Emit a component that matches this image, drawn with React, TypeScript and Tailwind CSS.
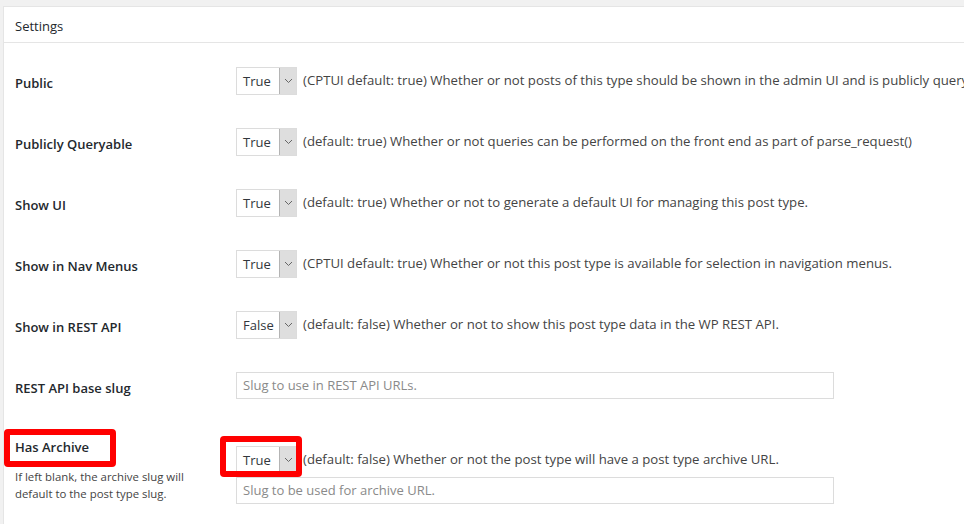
import React from "react";

const font = { fontFamily: '"Open Sans", "Noto Sans", sans-serif' };

function Select({ value }: { value: string }) {
  return (
    <div className="flex h-[28px] w-[61px] shrink-0 items-stretch border border-[#dcdcdc] bg-white">
      <div className="flex flex-1 items-center pl-[6px] pt-[2px] text-[13px] text-[#32373c]">{value}</div>
      <div className="flex w-[17px] items-center justify-center border-l border-[#b4b4b4] bg-[#dedede]">
        <svg width="9" height="6" viewBox="0 0 9 6">
          <path d="M1 1 L4.5 4.5 L8 1" fill="none" stroke="#666" strokeWidth="1" />
        </svg>
      </div>
    </div>
  );
}

function Row({ label, value, desc }: { label: string; value: string; desc: string }) {
  return (
    <div className="flex h-[61px] items-center">
      <div className="w-[232px] shrink-0 pl-[11px] pt-[6px] text-[13px] font-semibold text-[#23282d]">{label}</div>
      <div className="flex items-center gap-[6px] whitespace-nowrap">
        <Select value={value} />
        <span className="text-[13.2px] text-[#444]">{desc}</span>
      </div>
    </div>
  );
}

export default function App() {
  return (
    <div className="relative h-[524px] w-[964px] overflow-hidden bg-[#f1f1f1] pl-[3px] pt-[6px]" style={font}>
      <div className="h-[530px] border border-r-0 border-[#e5e5e5] bg-white">
        <div className="flex h-[36px] items-center border-b border-[#e5e5e5] pl-[11px] pt-[4px] text-[13px] text-[#23282d]">
          Settings
        </div>
        <div className="pt-[7px]">
          <Row label="Public" value="True" desc="(CPTUI default: true) Whether or not posts of this type should be shown in the admin UI and is publicly queryable." />
          <Row label="Publicly Queryable" value="True" desc="(default: true) Whether or not queries can be performed on the front end as part of parse_request()" />
          <Row label="Show UI" value="True" desc="(default: true) Whether or not to generate a default UI for managing this post type." />
          <Row label="Show in Nav Menus" value="True" desc="(CPTUI default: true) Whether or not this post type is available for selection in navigation menus." />
          <Row label="Show in REST API" value="False" desc="(default: false) Whether or not to show this post type data in the WP REST API." />
          <div className="flex h-[61px] items-center">
            <div className="w-[232px] shrink-0 pl-[11px] pt-[6px] text-[13px] font-semibold text-[#23282d]">REST API base slug</div>
            <div className="flex h-[27px] w-[598px] items-center border border-[#dcdcdc] bg-white pl-[6px] text-[13px] text-[#8a8a8a]">
              Slug to use in REST API URLs.
            </div>
          </div>
          <div className="flex pt-[30px]">
            <div className="-mt-[9px] w-[232px] shrink-0 pl-[11px]">
              <div className="pt-[1px] text-[13px] font-semibold text-[#23282d]">Has Archive</div>
              <div className="mt-[10px] text-[11.4px] leading-[17px] text-[#444]">
                If left blank, the archive slug will
                <br />
                default to the post type slug.
              </div>
            </div>
            <div className="flex flex-col gap-[3px]">
              <div className="flex items-center gap-[6px] whitespace-nowrap">
                <Select value="True" />
                <span className="text-[13.2px] text-[#444]">(default: false) Whether or not the post type will have a post type archive URL.</span>
              </div>
              <div className="flex h-[27px] w-[598px] items-center border border-[#dcdcdc] bg-white pl-[6px] text-[13px] text-[#8a8a8a]">
                Slug to be used for archive URL.
              </div>
            </div>
          </div>
        </div>
      </div>
      <div className="absolute left-[4px] top-[429px] h-[38px] w-[112px] rounded-[4px] border-[6px] border-[#ff0000]" />
      <div className="absolute left-[220px] top-[436px] h-[41px] w-[82px] rounded-[4px] border-[6px] border-[#ff0000]" />
    </div>
  );
}
